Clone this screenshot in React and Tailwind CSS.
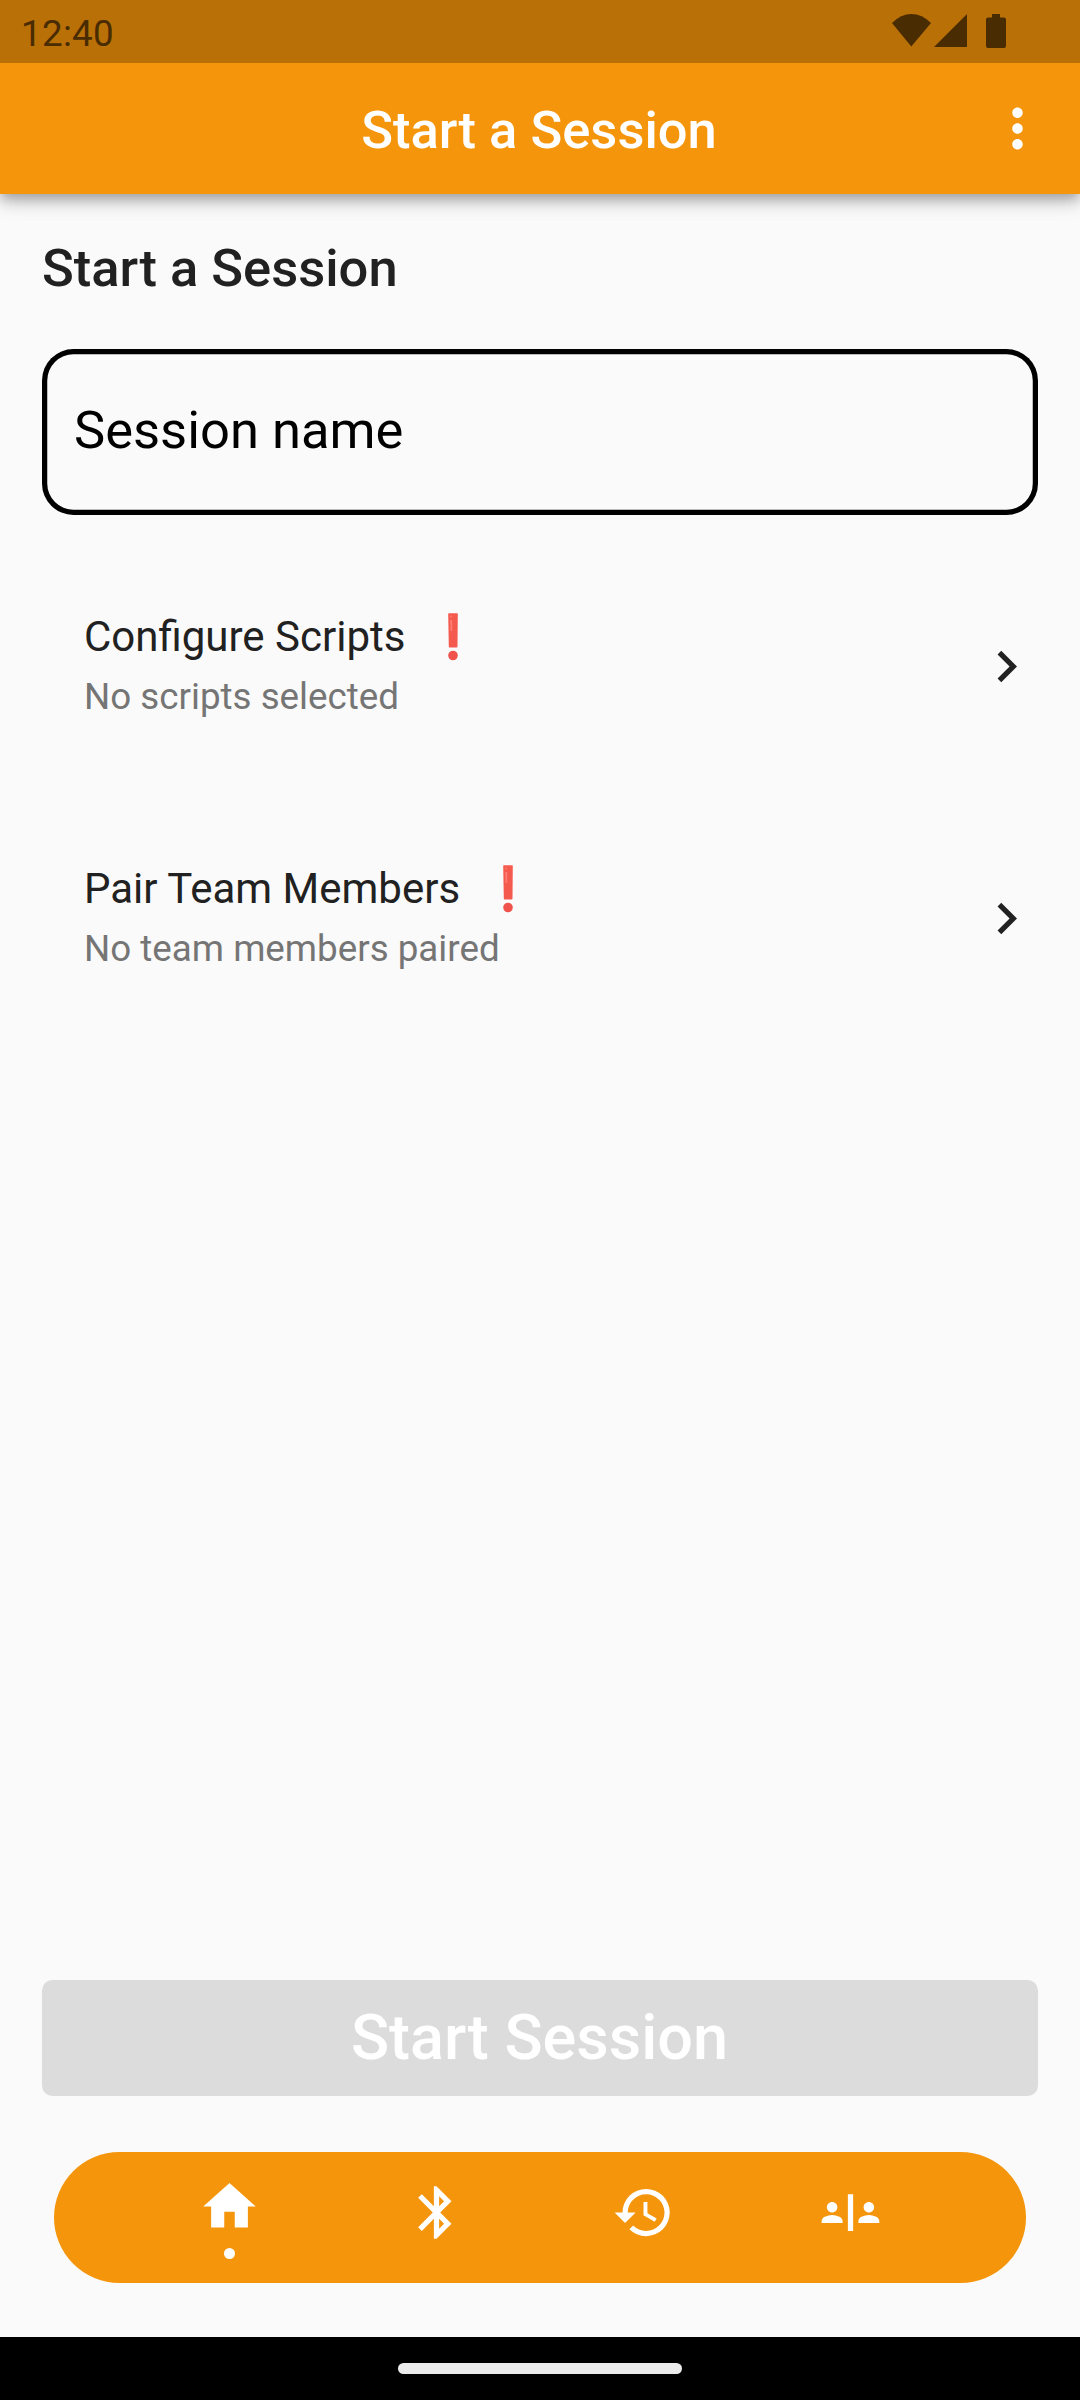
import { MdMoreVert, MdChevronRight, MdBluetooth, MdSafetyDivider } from "react-icons/md";

function StatusBar() {
  return (
    <div className="relative z-10 flex h-[63px] items-start justify-between bg-[#b97007] text-[#4a2c03]">
      <span className="pl-[21px] pt-[12px] text-[36.75px] leading-[43px] tracking-[0.3px]">12:40</span>
      <svg className="mr-[73px] mt-[14px] h-[34px] w-[116px]" viewBox="0 0 116 34" fill="currentColor">
        <path d="M1 9Q10 0 20.300 0Q31 0 40 9L20.300 32.600Z" />
        <path d="M76 0V33H43Z" />
        <path d="M101 0h8v3.500h4q2 0 2 2v26.500q0 2-2 2h-16q-2 0-2-2v-26.500q0-2 2-2h4Z" />
      </svg>
    </div>
  );
}

function AppBar() {
  return (
    <header className="relative grid h-[131px] grid-cols-[1fr_auto_1fr] items-center bg-[#f5950b] text-white shadow-[0_5px_10px_-2px_rgba(0,0,0,0.2),0_10px_13px_0_rgba(0,0,0,0.14),0_2px_26px_0_rgba(0,0,0,0.12)]">
      <span />
      <h1 className="pr-[2px] pt-[3px] text-[52.5px] font-medium leading-[62px]">Start a Session</h1>
      <MdMoreVert className="mr-[31.500px] size-[63px] justify-self-end" />
    </header>
  );
}

function Exclamation() {
  return (
    <svg className="ml-[42.500px] h-[49px] w-[10px]" viewBox="0 0 10 49">
      <path d="M.8 1.300h8.400q.6 0 .6.700L9.500 34.500q0 1.100-1 1.100H1.800q-1 0-1-1.100L.2 2q0-.7.600-.7Z" fill="#f55a4f" />
      <path d="M2.200 8h2v11H2.600Z" fill="#ff7d72" />
      <circle cx="3.200" cy="4.500" r=".9" fill="#ff7d72" />
      <circle cx="5" cy="43.500" r="4.800" fill="#f0534b" />
    </svg>
  );
}

function Row({ title, subtitle }) {
  return (
    <button className="flex h-[168px] w-full items-center justify-between pl-[42px] text-left">
      <span className="flex flex-col gap-[14px] pb-[3px]">
        <span className="flex text-[42px] leading-[49px] text-[#212121]">
          <span>{title}</span>
          <Exclamation />
        </span>
        <span className="text-[36.75px] leading-[43px] text-[#757575]">{subtitle}</span>
      </span>
      <MdChevronRight className="size-[63px] text-[#212121]" />
    </button>
  );
}

function HomeIcon() {
  return (
    <svg className="size-[63px]" viewBox="0 0 24 24" fill="currentColor">
      <path d="M10 20v-6h4v6h5v-8h3L12 3 2 12h3v8z" />
    </svg>
  );
}

function HistoryIcon() {
  return (
    <svg className="size-[63px]" viewBox="0 0 24 24" fill="currentColor">
      <path d="M13 3a9 9 0 0 0-9 9H1l3.890 3.890.07.14L9 12H6c0-3.870 3.130-7 7-7s7 3.130 7 7-3.130 7-7 7c-1.930 0-3.680-.79-4.940-2.060l-1.420 1.420A8.954 8.954 0 0 0 13 21a9 9 0 0 0 0-18zm-1 5v5l4.280 2.540.72-1.210-3.500-2.080V8z" />
    </svg>
  );
}

function BottomNav() {
  return (
    <nav className="mx-[54px] mt-[56px] grid h-[131.250px] grid-cols-4 rounded-full bg-[#f5950b] px-[72px] text-white">
      <div className="flex flex-col items-center pt-[23.250px]">
        <HomeIcon />
        <span className="mt-[10.500px] size-[11px] rounded-full bg-white" />
      </div>
      <div className="flex justify-center pt-[29.250px]"><MdBluetooth className="size-[63px]" /></div>
      <div className="flex justify-center pt-[29.250px]"><HistoryIcon /></div>
      <div className="flex justify-center pt-[29.250px]"><MdSafetyDivider className="size-[63px]" /></div>
    </nav>
  );
}

export default function App() {
  return (
    <div className="flex h-[2400px] w-[1080px] flex-col bg-[#fafafa] font-[Roboto,sans-serif]">
      <StatusBar />
      <AppBar />
      <main className="flex flex-1 flex-col px-[42px] pt-[43px]">
        <h2 className="text-[52.5px] font-medium leading-[62px] text-[#212121]">Start a Session</h2>
        <div className="mt-[50px] flex h-[165.500px] items-center rounded-[31.500px] pb-[3px] pl-8 text-[52.5px] leading-[62px] text-black shadow-[inset_0_0_0_5.25px_#000]">
          Session name
        </div>
        <div className="mt-[67.500px] flex flex-col gap-[84px]">
          <Row title="Configure Scripts" subtitle="No scripts selected" />
          <Row title="Pair Team Members" subtitle="No team members paired" />
        </div>
        <button className="mt-auto flex h-[115.500px] items-center justify-center rounded-[10.500px] bg-[#dcdcdc] pr-px text-[63px] font-medium leading-[74px] text-white">
          Start Session
        </button>
      </main>
      <BottomNav />
      <div className="mt-[54.250px] flex h-[63px] items-center justify-center bg-black">
        <div className="h-[11px] w-[284px] rounded-full bg-[#ececec]" />
      </div>
    </div>
  );
}
